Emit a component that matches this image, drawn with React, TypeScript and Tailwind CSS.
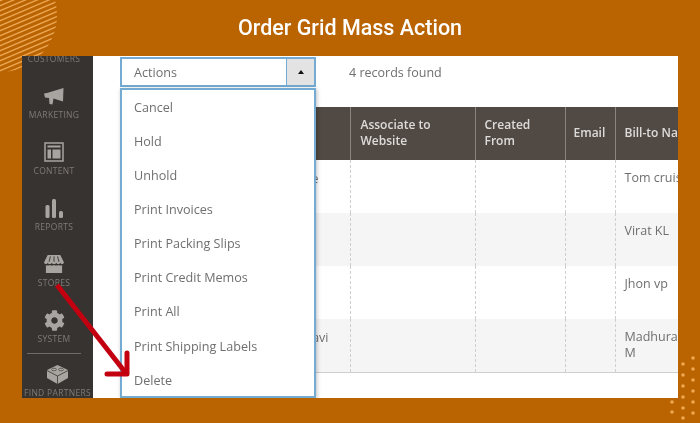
import { FaCog } from 'react-icons/fa'

const font = { fontFamily: '"Open Sans", sans-serif' }

const menuItems = [
  'Cancel',
  'Hold',
  'Unhold',
  'Print Invoices',
  'Print Packing Slips',
  'Print Credit Memos',
  'Print All',
  'Print Shipping Labels',
  'Delete',
]

const rows = [
  { name: 'Tom cruise', first: 'e', pad: 'pr-[31px]', bg: 'bg-white' },
  { name: 'Virat KL', first: '', pad: 'pr-[21px]', bg: 'bg-[#f5f5f5]' },
  { name: 'Jhon vp', first: '', pad: 'pr-[21px]', bg: 'bg-white' },
  { name: 'Madhurakavi M', first: 'avi', pad: 'pr-[21px]', bg: 'bg-[#f5f5f5]' },
]

function Megaphone() {
  return (
    <svg width="20" height="17" viewBox="0 0 20 17" fill="#a8a5a1">
      <path d="M0 5.5 L3 5 L19.5 0 L19 13.5 L9.5 10.5 L8.5 16.5 L5.5 16 L5 10 L1 9.5 Z" />
    </svg>
  )
}

function ContentIcon() {
  return (
    <svg width="20" height="20" viewBox="0 0 20 20" fill="none" stroke="#a8a5a1">
      <rect x="1" y="1" width="18" height="18" strokeWidth="1.5" />
      <path d="M3.5 4.5H16.5" strokeWidth="2" />
      <rect x="3.5" y="7.5" width="3.5" height="9" fill="#a8a5a1" strokeWidth="0" />
      <rect x="8.5" y="7.5" width="8" height="9" fill="#a8a5a1" strokeWidth="0" />
    </svg>
  )
}

function ReportsIcon() {
  return (
    <svg width="18" height="19" viewBox="0 0 18 19" fill="#a8a5a1">
      <rect x="0.5" y="6" width="4" height="13" rx="1.5" />
      <rect x="7" y="0" width="4" height="19" rx="1.5" />
      <rect x="14" y="12" width="4" height="7" rx="1.5" />
    </svg>
  )
}

function StoreIcon() {
  return (
    <svg width="22" height="18" viewBox="0 0 22 20" fill="#a8a5a1">
      <path d="M4 0 H18 L22 8 C22 10.5 18.5 10.5 18 8.5 C17.5 10.5 14 10.5 13.5 8.5 C13 10.5 9 10.5 8.5 8.5 C8 10.5 4.5 10.5 4 8.5 C3.5 10.5 0 10.5 0 8 Z" />
      <path d="M2 11 C3 12 5 12 6 11 C7.5 12 9.5 12 11 11 C12.5 12 14.5 12 16 11 C17 12 19 12 20 11 V20 H2 Z" />
      <path d="M7 1.5 L5.5 7.5 M11 1.5 V7.5 M15 1.5 L16.5 7.5" stroke="#373330" strokeWidth="1" />
    </svg>
  )
}

function BrickIcon() {
  return (
    <svg width="21" height="20" viewBox="0 0 21 20" fill="#a8a5a1">
      <path d="M0 6 L10.5 1 L21 6 V14 L10.5 20 L0 14 Z" />
      <path d="M0 6.5 L10.5 12 L21 6.5 M10.5 12 V20" stroke="#373330" strokeWidth="0.8" fill="none" />
      <ellipse cx="7" cy="5.5" rx="2.4" ry="1.3" stroke="#373330" strokeWidth="0.6" />
      <ellipse cx="14" cy="5.5" rx="2.4" ry="1.3" stroke="#373330" strokeWidth="0.6" />
    </svg>
  )
}

function NavItem({ label, icon }: { label: string; icon: React.ReactNode }) {
  return (
    <div className="flex h-[56px] flex-col items-center pt-[21px]">
      <div className="flex h-[22px] shrink-0 items-center justify-center">{icon}</div>
      <span className="mt-[2px] shrink-0 text-[8.5px] leading-[11px] tracking-[0.3px] text-[#7f7b78] whitespace-nowrap">{label}</span>
    </div>
  )
}

function StripedCircle() {
  const lines = []
  for (let i = -20; i < 140; i += 5) {
    lines.push(<line key={i} x1="-10" y1={i} x2="70" y2={i - 34} stroke="#eda755" strokeWidth="1.3" />)
  }
  return (
    <svg className="absolute left-0 top-0" width="60" height="75" viewBox="0 0 60 75">
      <defs>
        <clipPath id="circle-clip">
          <circle cx="0" cy="15" r="57" />
        </clipPath>
      </defs>
      <g clipPath="url(#circle-clip)">{lines}</g>
    </svg>
  )
}

function Dots() {
  const dots = [
    [693, 358], [693, 369], [693, 380], [693, 391], [693, 402], [693, 413],
    [683, 364], [683, 375], [683, 386], [683, 397], [683, 408], [683, 418],
    [672, 402], [672, 412],
  ]
  return (
    <svg className="absolute left-0 top-0" width="700" height="423">
      {dots.map(([x, y]) => (
        <circle key={`${x}-${y}`} cx={x} cy={y} r="1.8" fill="#f0a750" />
      ))}
    </svg>
  )
}

export default function App() {
  return (
    <div className="relative flex h-[423px] w-[700px] flex-col overflow-hidden bg-[#b96400] blur-[0.4px]" style={font}>
      <StripedCircle />
      <Dots />
      <div className="relative flex h-[56px] items-center justify-center">
        <h1 className="text-[21.5px] font-medium leading-none text-white" style={{ fontFamily: 'Roboto, sans-serif' }}>
          Order Grid Mass Action
        </h1>
      </div>

      <div className="relative mx-[22px] flex h-[342px] overflow-hidden bg-white">
        <aside className="flex w-[71px] shrink-0 flex-col items-stretch overflow-hidden bg-[#373330]">
          <div className="flex h-[8px] shrink-0 items-end justify-center pr-[7px]">
            <span className="text-[8.5px] leading-[11px] tracking-[0.3px] text-[#7f7b78]">CUSTOMERS</span>
          </div>
          <div className="shrink-0 pr-[7px]">
            <NavItem label="MARKETING" icon={<Megaphone />} />
            <NavItem label="CONTENT" icon={<ContentIcon />} />
            <NavItem label="REPORTS" icon={<ReportsIcon />} />
            <NavItem label="STORES" icon={<StoreIcon />} />
            <NavItem label="SYSTEM" icon={<FaCog size={21} color="#a8a5a1" />} />
          </div>
          <div className="ml-[5px] mr-[12px] mt-[9px] h-px shrink-0 bg-[#6f6b67]" />
          <div className="-mt-[12px] shrink-0 px-[2px]">
            <NavItem label="FIND PARTNERS" icon={<BrickIcon />} />
          </div>
        </aside>

        <main className="relative min-w-0 flex-1 pl-[27px] pt-px">
          <div className="flex h-[50px] items-start">
            <div className="flex h-[30px] w-[196px] shrink-0 border-2 border-[#74abd2] bg-white">
              <span className="flex-1 pl-[12px] text-[12.6px] leading-[28px] text-[#6f6f6f]">Actions</span>
              <div className="flex w-[28px] items-center justify-center border-l border-[#74abd2] bg-[#e3e3e3]">
                <div className="h-0 w-0 border-x-[3px] border-b-[4px] border-x-transparent border-b-[#111]" />
              </div>
            </div>
            <span className="ml-[33px] text-[12.5px] leading-[31px] text-[#6f6f6f]">4 records found</span>
          </div>

          <table className="w-[600px] table-fixed border-collapse text-[12.5px] text-[#6f6f6f]">
            <thead>
              <tr className="h-[53px] bg-[#514943] text-left text-white/80">
                <th className="w-[230px] border-r border-[#8a837f]" />
                <th className="w-[125px] border-r border-[#8a837f] px-[10px] pb-[2px] text-[12px] font-semibold leading-[16px]">Associate to Website</th>
                <th className="w-[90px] border-r border-[#8a837f] px-[9px] pb-[2px] text-[12px] font-semibold leading-[16px]">Created<br />From</th>
                <th className="w-[50px] border-r border-[#8a837f] px-[8px] pb-[2px] text-[12px] font-semibold leading-[16px]">Email</th>
                <th className="px-[9px] pb-[2px] text-[12px] font-semibold leading-[16px] whitespace-nowrap">Bill-to Name</th>
              </tr>
            </thead>
            <tbody>
              {rows.map((row) => (
                <tr key={row.name} className={`h-[53px] ${row.bg}`}>
                  <td className={`border-r border-dashed border-[#cfcfcf] ${row.pad} pt-[10px] text-right align-top`}>{row.first}</td>
                  <td className="border-r border-dashed border-[#cfcfcf]" />
                  <td className="border-r border-dashed border-[#cfcfcf]" />
                  <td className="border-r border-dashed border-[#cfcfcf]" />
                  <td className="px-[9px] pt-[10px] align-top leading-[16px]">{row.name}</td>
                </tr>
              ))}
            </tbody>
          </table>
          <div className="h-px w-[600px] bg-[#cfcfcf]" />

          {/* open actions menu */}
          <div className="absolute left-[27px] top-[32px] h-[310px] w-[196px] border-2 border-[#74abd2] bg-white pt-px shadow-[1px_1px_4px_rgba(0,0,0,0.25)]">
            {menuItems.map((item) => (
              <div key={item} className="flex h-[34.15px] items-center pl-[12px] text-[12.6px] text-[#6f6f6f]">
                {item}
              </div>
            ))}
          </div>
        </main>
      </div>

      <svg className="absolute left-0 top-0" width="700" height="423" fill="none" stroke="#c20010" strokeWidth="5">
        <path d="M57 285 L125 372" />
        <path d="M107 374 H127 V353" strokeLinejoin="round" strokeLinecap="round" />
      </svg>
    </div>
  )
}
